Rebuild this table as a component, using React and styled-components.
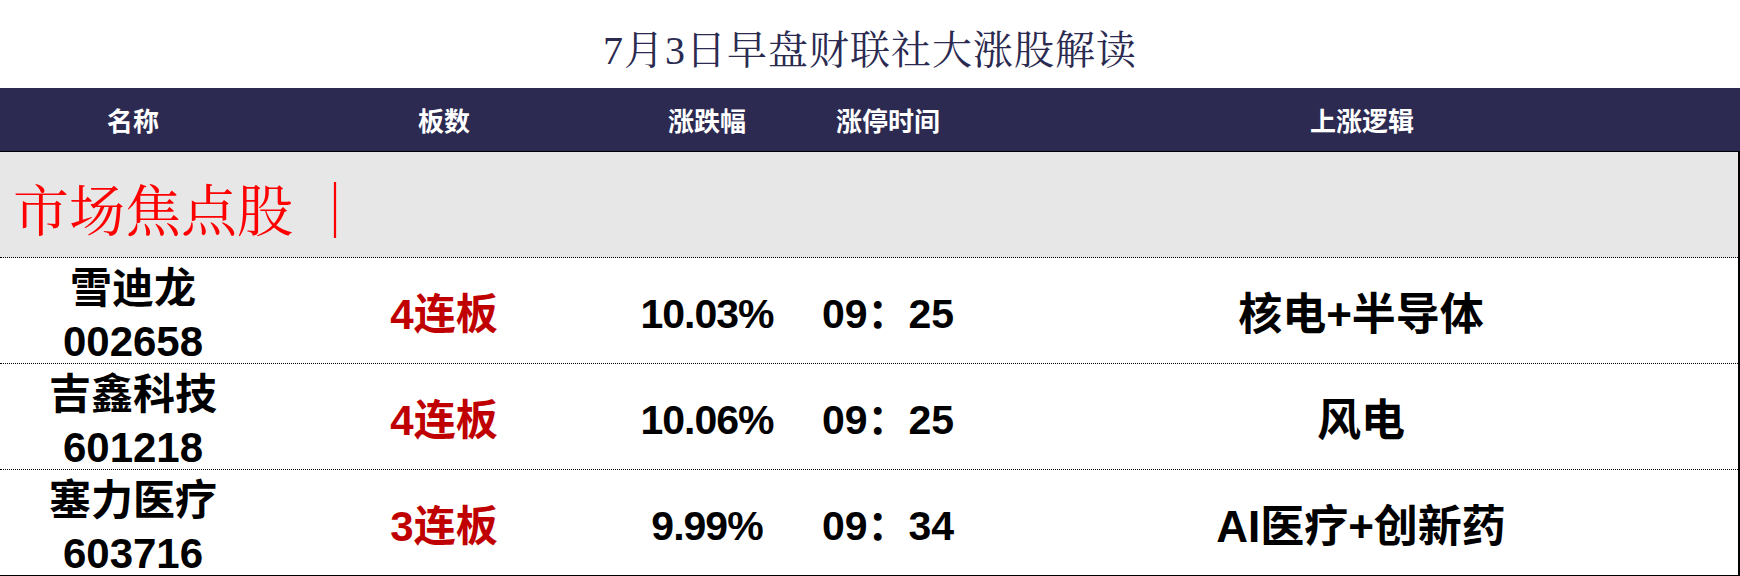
import React from "react";
import styled, { createGlobalStyle } from "styled-components";

const Global = createGlobalStyle`
  html, body { margin: 0; padding: 0; background: #fff; }
  body { overflow: hidden; }
`;

const COLS = "266px 356px 170px 192px 1fr";
const SANS = `"Liberation Sans", "Noto Sans CJK SC", sans-serif`;
const SERIF = `"Liberation Serif", "Noto Serif CJK SC", "Noto Sans CJK SC", serif`;

const Page = styled.div`
  width: 1740px;
  height: 576px;
  display: flex;
  flex-direction: column;
  background: #fff;
`;

const Title = styled.h1`
  margin: 0;
  height: 88px;
  box-sizing: border-box;
  padding-top: 4px;
  display: flex;
  align-items: center;
  justify-content: center;
  font-family: ${SERIF};
  font-weight: 400;
  font-size: 40px;
  letter-spacing: 1px;
  color: #2b2a50;
`;

const HeaderRow = styled.div`
  display: grid;
  grid-template-columns: ${COLS};
  height: 64px;
  box-sizing: border-box;
  background: #2c2a51;
  border-bottom: 1px solid #000;
`;

const HeadCell = styled.div`
  display: flex;
  align-items: center;
  justify-content: center;
  color: #fff;
  font-family: "Noto Sans CJK SC", sans-serif;
  font-weight: 700;
  font-size: 26px;
`;

const Body = styled.div`
  border-right: 2px solid #000;
  display: flex;
  flex-direction: column;
`;

const Section = styled.div`
  height: 106px;
  box-sizing: border-box;
  background: #e7e7e7;
  border-bottom: 1px dotted #000;
  display: flex;
  align-items: center;
  padding-left: 13px;
  padding-top: 4px;
  font-family: ${SERIF};
  font-size: 56px;
  color: #ff0000;
  white-space: pre;
`;

const Row = styled.div`
  display: grid;
  grid-template-columns: ${COLS};
  height: 106px;
  box-sizing: border-box;
  border-bottom: 1px ${(p) => (p.$last ? "solid" : "dotted")} #000;
`;

const Cell = styled.div`
  display: flex;
  flex-direction: column;
  align-items: center;
  justify-content: center;
  padding-top: ${(p) => p.$pt || 4}px;
  box-sizing: border-box;
  font-family: ${SANS};
  font-size: ${(p) => p.$size || 41}px;
  font-weight: ${(p) => p.$weight || 700};
  color: ${(p) => p.$color || "#000"};
  line-height: ${(p) => p.$lh || "1.2"};
  letter-spacing: ${(p) => p.$ls || 0}px;
  white-space: nowrap;
`;

const rows = [
  { name: "雪迪龙", code: "002658", board: "4连板", pct: "10.03%", time: "09：25", logic: "核电+半导体" },
  { name: "吉鑫科技", code: "601218", board: "4连板", pct: "10.06%", time: "09：25", logic: "风电" },
  { name: "塞力医疗", code: "603716", board: "3连板", pct: "9.99%", time: "09：34", logic: "AI医疗+创新药" },
];

export default function App() {
  return (
    <Page>
      <Global />
      <Title>7月3日早盘财联社大涨股解读</Title>
      <HeaderRow>
        <HeadCell>名称</HeadCell>
        <HeadCell>板数</HeadCell>
        <HeadCell>涨跌幅</HeadCell>
        <HeadCell>涨停时间</HeadCell>
        <HeadCell>上涨逻辑</HeadCell>
      </HeaderRow>
      <Body>
        <Section>市场焦点股 ｜</Section>
        {rows.map((r, i) => (
          <Row key={r.code} $last={i === rows.length - 1}>
            <Cell $size={42} $lh="53px" $pt={0}>
              <span>{r.name}</span>
              <span>{r.code}</span>
            </Cell>
            <Cell $size={42} $color="#c00000">{r.board}</Cell>
            <Cell $ls={-1}>{r.pct}</Cell>
            <Cell>{r.time}</Cell>
            <Cell $size={44}>{r.logic}</Cell>
          </Row>
        ))}
      </Body>
    </Page>
  );
}
